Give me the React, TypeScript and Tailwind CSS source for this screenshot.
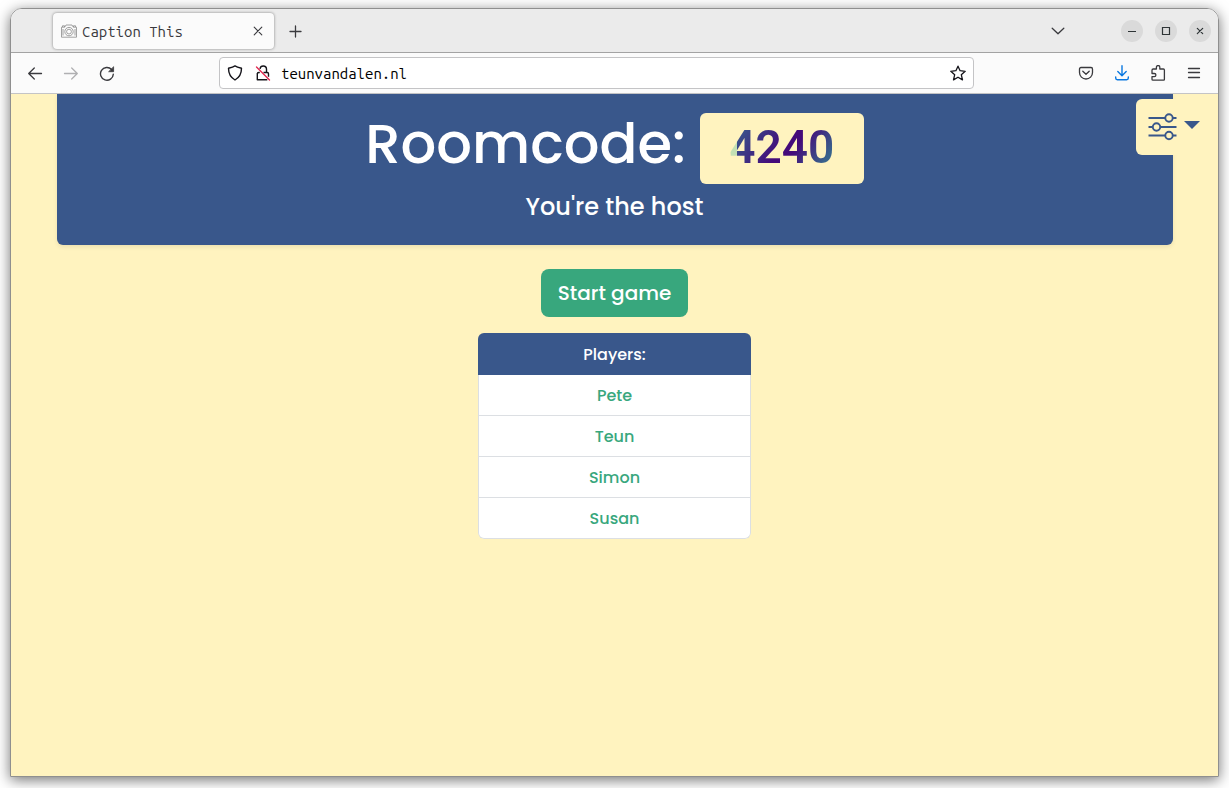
import React from "react";

const players = ["Pete", "Teun", "Simon", "Susan"];

type IconProps = {
  size?: number;
  className?: string;
  width?: number;
  children: React.ReactNode;
};

function Icon({ size = 16, className = "", width = 1.3, children }: IconProps) {
  return (
    <svg
      width={size}
      height={size}
      viewBox="0 0 16 16"
      fill="none"
      stroke="currentColor"
      strokeWidth={width}
      strokeLinecap="round"
      strokeLinejoin="round"
      className={`shrink-0 ${className}`}
      aria-hidden="true"
    >
      {children}
    </svg>
  );
}

type ToolButtonProps = { label: string; className?: string; children: React.ReactNode };

function ToolButton({ label, className = "", children }: ToolButtonProps) {
  return (
    <button type="button" aria-label={label} className={`flex size-9 items-center justify-center ${className}`}>
      {children}
    </button>
  );
}

function WindowButton({ label, children }: ToolButtonProps) {
  return (
    <button
      type="button"
      aria-label={label}
      className="flex size-[22px] items-center justify-center rounded-full bg-[#dadada] text-[#2e3436]"
    >
      {children}
    </button>
  );
}

function TabBar() {
  return (
    <div className="flex h-11 items-center border-b border-[#a3a3a3] bg-[#ebebeb] pr-[7px] pl-[42px] text-[#3a3a3e]">
      <div className="flex h-9 w-[221px] items-center rounded bg-[#fbfbfb] pr-2 pl-2 shadow-[0_0_3px_rgba(0,0,0,0.45)]">
        <svg width="16" height="14" viewBox="0 0 16 14" fill="none" stroke="#8a8a8a" strokeWidth="0.8" aria-hidden="true">
          <path d="M.5 3.2h3.2L5 1h6l1.3 2.2h3.2v10H.5z" />
          <path d="M1.5 3V1.800h2V3M12.500 3V1.800h2V3M2 5v6.500M14 5v6.500" />
          <circle cx="8" cy="7.6" r="4.2" />
          <circle cx="8" cy="7.6" r="2.4" />
        </svg>
        <span className="ml-[5px] flex-1 pt-[3px] font-['Ubuntu_Mono','DejaVu_Sans_Mono',monospace] text-[15px]">Caption This</span>
        <button type="button" aria-label="Close tab" className="flex size-4 items-center justify-center">
          <Icon width={1.1}>
            <path d="M4.2 4.2l7.600 7.600M11.800 4.200l-7.600 7.600" />
          </Icon>
        </button>
      </div>
      <ToolButton label="New tab" className="ml-1">
        <Icon>
          <path d="M7.5 3v11M2 8.500h11" />
        </Icon>
      </ToolButton>
      <ToolButton label="List all tabs" className="mr-[45px] ml-auto">
        <Icon>
          <path d="M2.2 5.200L8 10.800l5.800-5.600" />
        </Icon>
      </ToolButton>
      <div className="flex gap-3">
        <WindowButton label="Minimize">
          <Icon width={1.2}>
            <path strokeLinecap="butt" d="M4 8.500h8" />
          </Icon>
        </WindowButton>
        <WindowButton label="Maximize">
          <Icon width={1.2}>
            <path strokeLinejoin="miter" d="M4.500 4.500h7v7h-7z" />
          </Icon>
        </WindowButton>
        <WindowButton label="Close">
          <Icon width={1.2}>
            <path d="M5.300 5.300l5.400 5.400M10.700 5.300l-5.400 5.400" />
          </Icon>
        </WindowButton>
      </div>
    </div>
  );
}

function Toolbar() {
  return (
    <div className="flex h-[41px] items-center border-b border-[#c4c4c6] bg-[#fbfbfb] px-[6px] text-[#3a3a3e]">
      <ToolButton label="Back">
        <Icon width={1.3}>
          <path d="M14.500 8.500H1.800M7.300 3L1.700 8.500l5.600 5.500" />
        </Icon>
      </ToolButton>
      <ToolButton label="Forward" className="text-[#b0b0b2]">
        <Icon width={1.3}>
          <path d="M1.500 8.500h12.700M8.700 3L14.300 8.500l-5.600 5.500" />
        </Icon>
      </ToolButton>
      <ToolButton label="Reload">
        <Icon width={1.4}>
          <path d="M14.300 9.200A6.400 6.400 0 1 1 12.600 4.500" />
          <path fill="currentColor" strokeWidth="0.8" d="M14.600 2.100v4.600H10z" />
        </Icon>
      </ToolButton>
      <div className="ml-[94px] flex h-8 max-w-[755px] flex-1 items-center rounded border border-[#c4c4c6] bg-white px-[7px] text-[#15141a]">
        <Icon width={1.4}>
          <path d="M8 .9C6.300 2 3.800 2.700 1.500 3.300c0 5.200 1.600 8.900 6.500 11.700C12.900 12.200 14.500 8.500 14.500 3.300 12.200 2.700 9.700 2 8 .9z" />
        </Icon>
        <Icon width={1.4} className="ml-3">
          <path strokeLinecap="butt" d="M5 3.800C5.300 2 6.600 1 8.200 1c1.900 0 3.300 1.300 3.300 3.300V7M2.300 8v6.800h10M8.500 7.500h3.800c.8 0 1.200.4 1.200 1.200v3M2.300 9.500V9c0-1 .5-1.500 1.500-1.500h1" />
          <path stroke="#e22850" d="M1.500 2l13 13" />
        </Icon>
        <input
          aria-label="Address"
          defaultValue="teunvandalen.nl"
          className="ml-[10px] min-w-0 flex-1 bg-transparent pt-[2px] font-['Ubuntu_Mono','DejaVu_Sans_Mono',monospace] text-[15px] text-black outline-none"
        />
        <button type="button" aria-label="Bookmark this page">
          <Icon width={1.3}>
            <path d="M8 1.200l2.100 4.500 5.100.6-3.900 3.400 1.200 5.200L8 12.200l-4.500 2.700 1.200-5.200L.8 6.300l5.100-.6z" />
          </Icon>
        </button>
      </div>
      <div className="ml-auto flex">
        <ToolButton label="Save to Pocket">
          <Icon width={1.3}>
            <path d="M3 2.500h10c.9 0 1.500.6 1.500 1.500v3.500a6.500 6.500 0 0 1-13 0V4c0-.9.6-1.500 1.500-1.500z" />
            <path d="M4.800 6.200L8 9.300l3.200-3.100" />
          </Icon>
        </ToolButton>
        <ToolButton label="Downloads" className="text-[#0a78e0]">
          <Icon width={1.4}>
            <path d="M8 .8v9.700M3.800 6.500L8 10.700l4.200-4.200M1.700 12v1c0 1 .6 1.700 1.600 1.700h9.400c1 0 1.600-.7 1.600-1.700v-1" />
          </Icon>
        </ToolButton>
        <ToolButton label="Extensions">
          <Icon width={1.3}>
            <path d="M2 7V5.200C2 4.500 2.400 4 3.200 4h3.200V2.200a1.700 1.700 0 0 1 3.400 0V4h3.600c.7 0 1 .4 1 1v9.500c0 .4-.2.700-.7.700H3c-.6 0-1-.3-1-.9V11.700h2.300a1.600 1.600 0 0 0 0-3.200H2z" />
          </Icon>
        </ToolButton>
        <ToolButton label="Open application menu">
          <Icon width={1.3}>
            <path d="M2.500 3.500h11M2.500 7.500h11M2.500 12.500h11" />
          </Icon>
        </ToolButton>
      </div>
    </div>
  );
}

function SettingsMenu() {
  return (
    <button
      type="button"
      aria-label="Settings"
      className="absolute top-[5px] right-0 flex h-14 w-[82px] items-center gap-[7px] rounded-md bg-[#fff3bf] pl-3 text-[#39578b]"
    >
      <svg width="29" height="28" viewBox="0 0 29 28" fill="none" stroke="currentColor" strokeWidth="1.9" aria-hidden="true">
        <path d="M.5 5h16.500M25 5h3.500M.5 14h4M13 14h15.500M.5 22.500h16.500M25 22.500h3.500" />
        <circle cx="21" cy="5" r="3.7" />
        <circle cx="8.5" cy="14" r="3.7" />
        <circle cx="21" cy="22.5" r="3.7" />
      </svg>
      <svg width="16" height="8" viewBox="0 0 16 8" fill="currentColor" className="-mt-1" aria-hidden="true">
        <path d="M0 0h16L8 8z" />
      </svg>
    </button>
  );
}

export default function App() {
  return (
    <div className="flex min-h-screen flex-col bg-white px-[10px] pt-2 pb-[11px]">
      <div className="flex flex-1 flex-col overflow-hidden rounded-t-xl border border-[#8f8f8f] shadow-[0_3px_14px_rgba(0,0,0,0.55)]">
        <TabBar />
        <Toolbar />
        <main className="relative flex flex-1 flex-col items-center bg-[#fff3bf] px-[45px] font-[Poppins,Inter,sans-serif] font-medium">
          <header className="flex w-full max-w-[1116px] flex-col items-center rounded-b-md bg-[#39578b] pt-[19px] pb-5 text-white shadow-[0_2px_4px_rgba(0,0,0,0.08)]">
            <h1 className="flex items-start gap-[14px] text-[56px] leading-[62px]">
              <span>Roomcode:</span>
              <span className="flex h-[71px] w-[164px] items-center justify-center rounded-md bg-[#fff3bf] pb-1 font-[Roboto,sans-serif] text-[46px] font-semibold">
                <span className="bg-[linear-gradient(90deg,#c3e0b4_8px,transparent_8px),linear-gradient(125deg,#39578b_5%,#440a7a_45%,#440a7a_55%,#39638b_82%)] bg-[position:0_0,8px_0] bg-clip-text bg-no-repeat leading-[50px] text-transparent">
                  4240
                </span>
              </span>
            </h1>
            <p className="mt-[5px] text-2xl leading-9">You&#39;re the host</p>
          </header>
          <SettingsMenu />
          <button
            type="button"
            className="mt-6 h-12 w-[147px] rounded-lg bg-[#38a77d] text-xl text-white"
          >
            Start game
          </button>
          <section className="mt-4 w-[273px] overflow-hidden rounded-md text-center text-base leading-6">
            <h2 className="bg-[#39578b] pt-[10px] pb-2 text-white">Players:</h2>
            <ul className="rounded-b-md border-x border-b border-[#dcdfe3] bg-white text-[#38a77d]">
              {players.map((name) => (
                <li key={name} className="border-b border-[#dcdfe3] pt-[9px] pb-[7px] last:border-b-0">
                  {name}
                </li>
              ))}
            </ul>
          </section>
        </main>
      </div>
    </div>
  );
}
